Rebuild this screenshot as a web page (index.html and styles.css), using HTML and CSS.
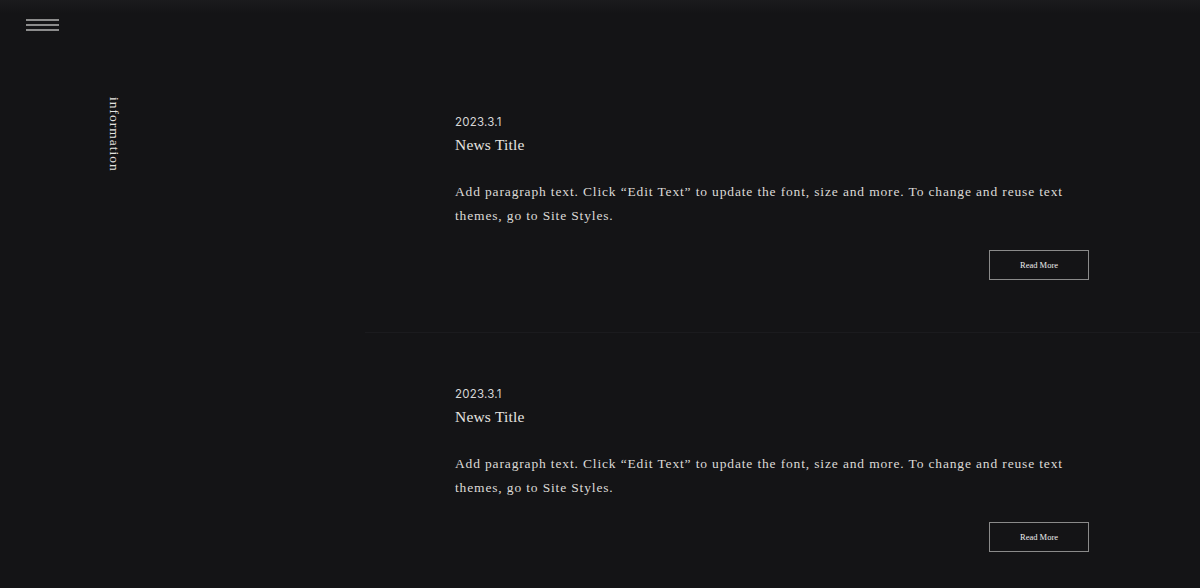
FILE: index.html
```html
<!DOCTYPE html>
<html lang="en">
<head>
    <meta charset="UTF-8">
    <meta name="viewport" content="width=device-width, initial-scale=1.0">
    <title>Information</title>
    <link rel="stylesheet" href="styles.css">
</head>
<body>
    <header class="top-bar">
        <button class="menu-button" type="button" aria-label="Menu">
            <span></span><span></span><span></span>
        </button>
    </header>

    <div class="page">
        <aside class="side">
            <h2 class="side-title">information</h2>
        </aside>

        <main class="news">
            <article class="news-item">
                <div class="news-date">2023.3.1</div>
                <h3 class="news-title">News Title</h3>
                <p class="news-text">Add paragraph text. Click “Edit Text” to update the font, size and more. To change and reuse text themes, go to Site Styles.</p>
                <div class="news-actions">
                    <a class="read-more" href="#">Read More</a>
                </div>
            </article>

            <article class="news-item">
                <div class="news-date">2023.3.1</div>
                <h3 class="news-title">News Title</h3>
                <p class="news-text">Add paragraph text. Click “Edit Text” to update the font, size and more. To change and reuse text themes, go to Site Styles.</p>
                <div class="news-actions">
                    <a class="read-more" href="#">Read More</a>
                </div>
            </article>
        </main>
    </div>
</body>
</html>
```

FILE: styles.css
```css
/* --- General Setup --- */
:root {
    --bg-color: #141416;
    --text-color: #e6e4e0;
    --line-color: #1b1b1e;
    --border-color: #8a8a8a;
}

body {
    margin: 0;
    background-color: var(--bg-color);
    color: var(--text-color);
    font-family: 'Liberation Serif', 'DejaVu Serif', serif;
    overflow: hidden;
}

/* --- Top Bar --- */
.top-bar {
    height: 61px;
    padding-left: 26px;
    box-sizing: border-box;
    background-image: linear-gradient(to bottom, #1b1b1d, var(--bg-color) 14px);
}

.menu-button {
    display: flex;
    flex-direction: column;
    gap: 3px;
    width: 33px;
    padding: 19px 0 0;
    border: none;
    background: none;
    cursor: pointer;
}

.menu-button span {
    display: block;
    height: 2px;
    width: 100%;
    background-color: #8c8c8c;
}

/* --- Layout --- */
.page {
    display: flex;
}

.side {
    width: 365px;
    flex-shrink: 0;
    padding-left: 106px;
    padding-top: 36px;
    box-sizing: border-box;
}

.side-title {
    margin: 0;
    writing-mode: vertical-rl;
    font-size: 13.5px;
    font-weight: 400;
    letter-spacing: 1px;
    line-height: 16px;
}

.news {
    flex: 1;
}

/* --- News Items --- */
.news-item {
    height: 272px;
    padding: 54px 111px 0 90px;
    box-sizing: border-box;
    border-bottom: 1px solid var(--line-color);
}

.news-item:last-child {
    border-bottom: none;
}

.news-date {
    font-family: 'Inter', 'Liberation Sans', sans-serif;
    font-size: 11.5px;
    line-height: 14px;
    letter-spacing: 0.2px;
    color: #d6d6d6;
}

.news-title {
    margin: 6px 0 0;
    font-size: 15.5px;
    font-weight: 400;
    line-height: 20px;
    letter-spacing: 0.2px;
}

.news-text {
    margin: 25px 0 0;
    font-size: 13.5px;
    line-height: 24px;
    letter-spacing: 0.85px;
    color: #dcdad6;
}

.news-actions {
    display: flex;
    justify-content: flex-end;
    margin-top: 22px;
}

.read-more {
    display: flex;
    align-items: center;
    justify-content: center;
    width: 100px;
    height: 30px;
    box-sizing: border-box;
    border: 1px solid var(--border-color);
    color: #eeeeee;
    font-size: 8.5px;
    text-decoration: none;
}
```
